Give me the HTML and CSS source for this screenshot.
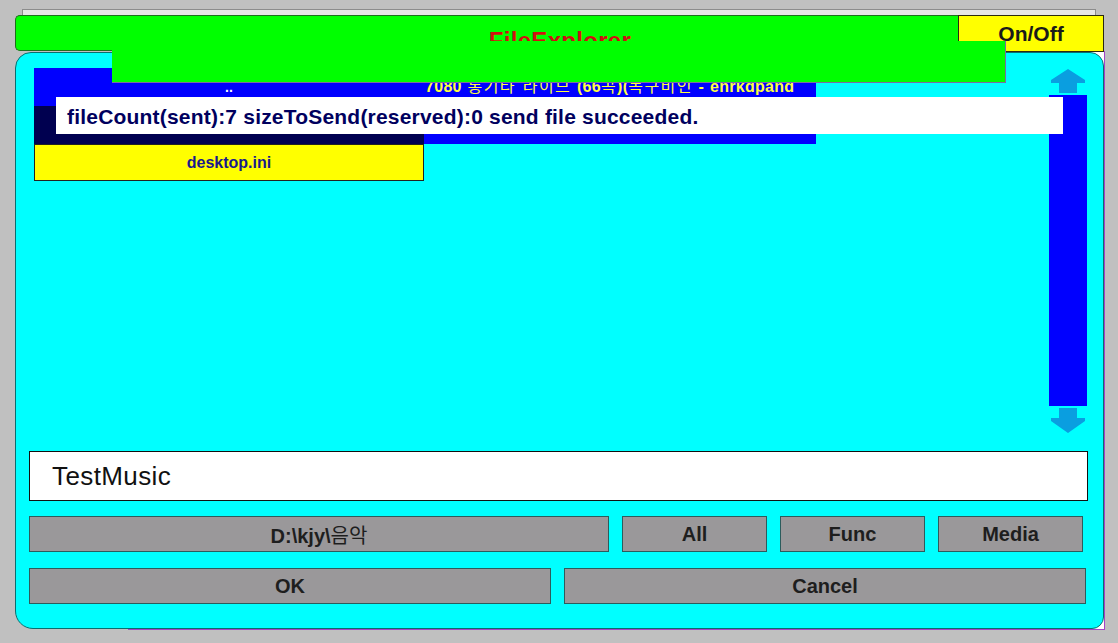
FILE: index.html
```html
<!DOCTYPE html>
<html lang="ko">
<head>
<meta charset="utf-8">
<title>FileExplorer</title>
<link rel="stylesheet" href="styles.css">
</head>
<body>
<div class="desk">
  <div class="win-back"></div>
  <div class="win-purple"></div>

  <div class="dialog">
    <div class="titlebar">
      <div class="tb-spacer"></div>
      <div class="tb-title">FileExplorer</div>
      <div class="tb-onoff">On/Off</div>
    </div>

    <div class="panel">
      <div class="upper">
        <div class="list">
          <div class="cell blue up">..</div>
          <div class="cell blue name"><span class="name-text">7080 <span class="ko">통기타 라이브</span> (66<span class="ko">곡</span>)(<span class="ko">목구비인</span> - enrkdpand</span></div>
          <div class="cell navy"></div>
          <div class="cell blue"></div>
          <div class="cell yellow">desktop.ini</div>
          <div class="cell empty"></div>
        </div>
        <div class="scroll">
          <svg class="arrow" width="38" height="24" viewBox="0 0 38 24"><polygon points="19,0 36,11 36,14 28,14 28,24 10,24 10,14 2,14 2,11" /></svg>
          <div class="track"></div>
          <svg class="arrow" width="38" height="25" viewBox="0 0 38 25"><polygon points="10,0 28,0 28,10 36,10 36,13 19,25 2,13 2,10 10,10" /></svg>
        </div>
      </div>

      <div class="input">TestMusic</div>

      <div class="btn-row">
        <div class="btn w-path">D:\kjy\<span class="ko">음악</span></div>
        <div class="btn w-small">All</div>
        <div class="btn w-small">Func</div>
        <div class="btn w-small">Media</div>
      </div>
      <div class="btn-row row2">
        <div class="btn w-half">OK</div>
        <div class="btn w-half">Cancel</div>
      </div>
    </div>
  </div>

  <div class="overlay-green"></div>
  <div class="toast">fileCount(sent):7 sizeToSend(reserved):0 send file succeeded.</div>
</div>
</body>
</html>
```

FILE: styles.css
```css
* { box-sizing: border-box; }

html, body {
  margin: 0;
  padding: 0;
  background: #c0c0c0;
  font-family: "Liberation Sans", Arial, "Noto Sans CJK KR", sans-serif;
}

.desk {
  position: relative;
  width: 1118px;
  height: 643px;
  overflow: hidden;
}

.ko {
  font-family: "Noto Sans CJK KR", "Liberation Sans", sans-serif;
  font-weight: normal;
}

/* windows behind the dialog */
.win-back {
  position: absolute;
  left: 22px;
  top: 9px;
  width: 1074px;
  height: 40px;
  background: #e6e6e6;
  border: 1px solid #8c8c8c;
}

.win-purple {
  position: absolute;
  left: 128px;
  top: 51px;
  width: 977px;
  height: 579px;
  background: #ffffff;
  border: 1px solid #a444c8;
}

/* main dialog */
.dialog {
  position: absolute;
  left: 15px;
  top: 15px;
  width: 1089px;
}

.titlebar {
  display: grid;
  grid-template-columns: 146px 1fr 146px;
  height: 36px;
  background: #00ff00;
  border: 1px solid #1d6f1d;
  border-right: none;
  border-radius: 5px 0 0 5px;
}

.tb-title {
  text-align: center;
  color: #d01010;
  font-weight: bold;
  font-size: 24px;
  line-height: 24px;
  padding-top: 13px;
  letter-spacing: 0.3px;
}

.tb-onoff {
  margin-top: -1px;
  height: 37px;
  background: #ffff00;
  border: 1px solid #2a2a10;
  color: #1a1a1a;
  font-weight: bold;
  font-size: 21px;
  line-height: 35px;
  text-align: center;
}

.panel {
  margin-top: 1px;
  height: 577px;
  background: #00ffff;
  border: 1px solid #0a6e6e;
  border-radius: 16px 14px 12px 18px;
  padding: 15px 15px 0 13px;
}

.upper {
  display: flex;
  justify-content: space-between;
  height: 383px;
}

.list {
  margin-left: 5px;
  display: grid;
  grid-template-columns: 390px 392px;
  grid-template-rows: 38px 38px 37px;
  align-self: flex-start;
}

.cell {
  display: flex;
  align-items: center;
  justify-content: center;
  white-space: nowrap;
  font-weight: bold;
  font-size: 15px;
}

.blue { background: #0000ff; }
.navy { background: #000050; }
.up { color: #ffffff; font-size: 14px; }
.name {
  color: #ffff40;
  overflow: hidden;
  justify-content: flex-start;
  padding-left: 1px;
  padding-bottom: 4px;
}
.name-text { font-size: 16px; letter-spacing: 0.3px; word-spacing: 1px; }
.name-text .ko { letter-spacing: 1.4px; }
.yellow {
  background: #ffff00;
  border: 1px solid #222222;
  color: #1a1a8c;
  font-size: 16px;
}
.empty { background: transparent; }

.scroll {
  display: flex;
  flex-direction: column;
  width: 38px;
  margin-top: 1px;
  margin-right: 1px;
}

.arrow { display: block; fill: #0a9ee0; }

.track {
  margin: 2px 0;
  height: 311px;
  background: #0000ff;
}

.input {
  height: 50px;
  background: #ffffff;
  border: 1px solid #111111;
  padding-left: 22px;
  font-size: 26px;
  line-height: 48px;
  color: #111111;
  letter-spacing: 0.4px;
}

.btn-row {
  display: flex;
  gap: 13px;
  margin-top: 15px;
}

.btn-row.row2 { margin-top: 16px; }

.btn {
  height: 36px;
  background: #9a989a;
  border: 1px solid #2c5c5c;
  color: #1e1e1e;
  font-weight: bold;
  font-size: 20px;
  line-height: 35px;
  text-align: center;
}

.w-path { width: 580px; }
.w-small { width: 145px; }
.w-half { width: 522px; }

/* overlapping pieces */
.overlay-green {
  position: absolute;
  left: 112px;
  top: 41px;
  width: 894px;
  height: 42px;
  background: #00ff00;
  border-right: 1px solid #7c6aa4;
  border-bottom: 1px solid #7c6aa4;
}

.toast {
  position: absolute;
  left: 56px;
  top: 97px;
  width: 1007px;
  height: 37px;
  background: #ffffff;
  padding-left: 11px;
  color: #00005e;
  font-weight: bold;
  font-size: 21px;
  letter-spacing: 0.2px;
  line-height: 40px;
  white-space: nowrap;
}
```
